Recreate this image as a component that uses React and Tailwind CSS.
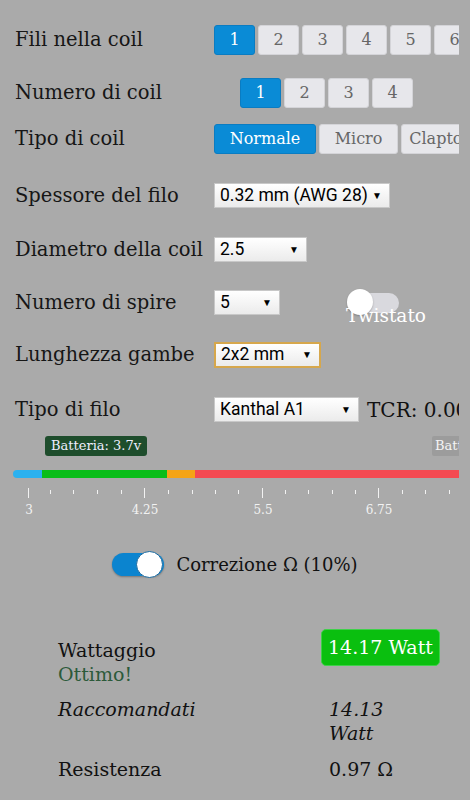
const serif = "font-['DejaVu_Serif','Liberation_Serif',serif]";
const sans = "font-['Roboto','Liberation_Sans',sans-serif]";

const Seg = ({ items, active = 0, widths }) => (
    <div className="flex gap-[3px] shrink-0">
        { items.map((t, i) => (
            <div
                key={ t }
                className={ `h-[30px] shrink-0 flex items-center justify-center rounded-[3px] text-[16px] ${ i === active ? "bg-[#0a8bd6] text-white border border-[#0a7cc2]" : "bg-[#e7e7eb] text-[#666] border border-[#d4d4d8]" }` }
                style={{ width: widths ? widths[i] : 41 }}
            >
                { t }
            </div>
        )) }
    </div>
)

const Select = ({ value, w, gold }) => (
    <div
        className={ `h-[25px] shrink-0 flex items-center justify-between pl-[5px] pr-[7px] bg-[linear-gradient(to_bottom,#ffffff,#ebebeb)] text-[17.5px] text-black ${ sans } ${ gold ? "border-2 border-[#d6a74c] h-[26px]" : "border border-[#c8c8c8]" }` }
        style={{ width: w }}
    >
        <span>{ value }</span>
        <span className="text-[10px]">▼</span>
    </div>
)

const Row = ({ label, top, h = 30, children }) => (
    <div className="flex items-center" style={{ marginTop: top, height: h }}>
        <div className="w-[199px] shrink-0 text-[19.5px] text-[#161616] whitespace-nowrap">{ label }</div>
        { children }
    </div>
)

const majors = [ 28, 144, 262, 378 ]
const minors = [ 50, 73, 97, 121, 168, 192, 215, 238, 285, 308, 332, 355, 402, 425, 449 ]

const App = () => {
    return (
        <div className={ `w-[470px] h-[800px] bg-[#aaaaaa] overflow-hidden ${ serif }` }>
            <div className="w-[459px] overflow-hidden pl-[15px]">
                <Row label="Fili nella coil" top={ 25 }>
                    <Seg items={ [ "1", "2", "3", "4", "5", "6" ] } />
                </Row>
                <Row label="Numero di coil" top={ 23 }>
                    <div className="ml-[26px]">
                        <Seg items={ [ "1", "2", "3", "4" ] } />
                    </div>
                </Row>
                <Row label="Tipo di coil" top={ 16 }>
                    <Seg items={ [ "Normale", "Micro", "Clapton" ] } widths={ [ 102, 79, 80 ] } />
                </Row>
                <Row label="Spessore del filo" top={ 29 } h={ 25 }>
                    <Select value="0.32 mm (AWG 28)" w={ 176 } />
                </Row>
                <Row label="Diametro della coil" top={ 29 } h={ 25 }>
                    <Select value="2.5" w={ 93 } />
                </Row>
                <Row label="Numero di spire" top={ 28 } h={ 25 }>
                    <Select value="5" w={ 66 } />
                    <div className="relative ml-[67px] w-[52px] h-[25px]">
                        <div className="absolute left-0 top-[3px] w-[52px] h-[20px] rounded-full bg-[#d9d9de]"></div>
                        <div className="absolute left-0 top-[-1px] w-[26px] h-[26px] rounded-full bg-white shadow-[0_1px_2px_rgba(0,0,0,0.25)]"></div>
                        <div className="absolute left-[-1px] top-[12px] text-[18.5px] text-white whitespace-nowrap">Twistato</div>
                    </div>
                </Row>
                <Row label="Lunghezza gambe" top={ 27 } h={ 25 }>
                    <Select value="2x2 mm" w={ 107 } gold />
                </Row>
                <Row label="Tipo di filo" top={ 30 } h={ 25 }>
                    <Select value="Kanthal A1" w={ 145 } />
                    <div className="ml-[8px] text-[20px] text-[#111] whitespace-nowrap">TCR: 0.00075</div>
                </Row>

                <div className="relative h-[20px] mt-[14px]">
                    <div className="absolute left-[30px] top-0 h-[20px] px-[6px] rounded-[3px] bg-[#1e4d2c] text-[#eef] text-[13px] leading-[20px] whitespace-nowrap">Batteria: 3.7v</div>
                    <div className="absolute left-[417px] top-0 h-[20px] px-[3px] rounded-[2px] bg-[#9c9c9c] text-[#f4f4f4] text-[13px] leading-[20px] whitespace-nowrap">Batteria: 4.2v</div>
                </div>

                <div className="flex h-[8px] mt-[14px] -ml-[2px] overflow-hidden rounded-l-[4px]">
                    <div className="w-[29px] bg-[#2bb1ef]"></div>
                    <div className="w-[125px] bg-[#0abd1a]"></div>
                    <div className="w-[28px] bg-[#f5a417]"></div>
                    <div className="flex-1 bg-[#f44a52]"></div>
                </div>

                <div className="relative h-[30px] mt-[10px] -ml-[15px]">
                    { majors.map(x => (
                        <div key={ x } className="absolute top-0 w-[1px] h-[10px] bg-[#f2f2f2]" style={{ left: x }}></div>
                    )) }
                    { minors.map(x => (
                        <div key={ x } className="absolute top-[2px] w-[1px] h-[4px] bg-[#f2f2f2]" style={{ left: x }}></div>
                    )) }
                    { [ [ 28, "3" ], [ 144, "4.25" ], [ 262, "5.5" ], [ 378, "6.75" ] ].map(([ x, t ]) => (
                        <div key={ t } className="absolute top-[13px] w-[40px] -ml-[20px] text-center text-[12px] text-[#f2f2f2]" style={{ left: x + 1 }}>{ t }</div>
                    )) }
                </div>
            </div>

            <div className="flex items-center justify-center gap-[12px] mt-[33px]">
                <div className="relative w-[52px] h-[27px]">
                    <div className="absolute left-0 top-[2px] w-[52px] h-[23px] rounded-full bg-[#0b84cf] shadow-[0_1px_2px_rgba(0,0,0,0.3)]"></div>
                    <div className="absolute right-[1px] top-0 w-[27px] h-[27px] rounded-full bg-white border border-[#1a6aa0]"></div>
                </div>
                <div className="text-[18px] text-[#111]">Correzione Ω (10%)</div>
            </div>

            <div className="grid grid-cols-[263px_1fr] pl-[58px] mt-[51px] text-[19px] text-[#111]">
                <div className="pt-[9px] leading-[24px]">
                    <div>Wattaggio</div>
                    <div className="text-[#2c5a3a]">Ottimo!</div>
                </div>
                <div>
                    <div className="inline-block h-[37px] px-[6px] rounded-[5px] bg-[#0abf0f] border border-[#3fd04a] text-white text-[19px] leading-[35px] whitespace-nowrap">14.17 Watt</div>
                </div>
                <div className="mt-[11px] italic leading-[24px]">Raccomandati</div>
                <div className="mt-[11px] pl-[8px] italic leading-[24px] w-[70px]">14.13 Watt</div>
                <div className="mt-[12px] leading-[24px]">Resistenza</div>
                <div className="mt-[12px] pl-[8px] leading-[24px]">0.97 Ω</div>
            </div>
        </div>
    )
}

export default App
